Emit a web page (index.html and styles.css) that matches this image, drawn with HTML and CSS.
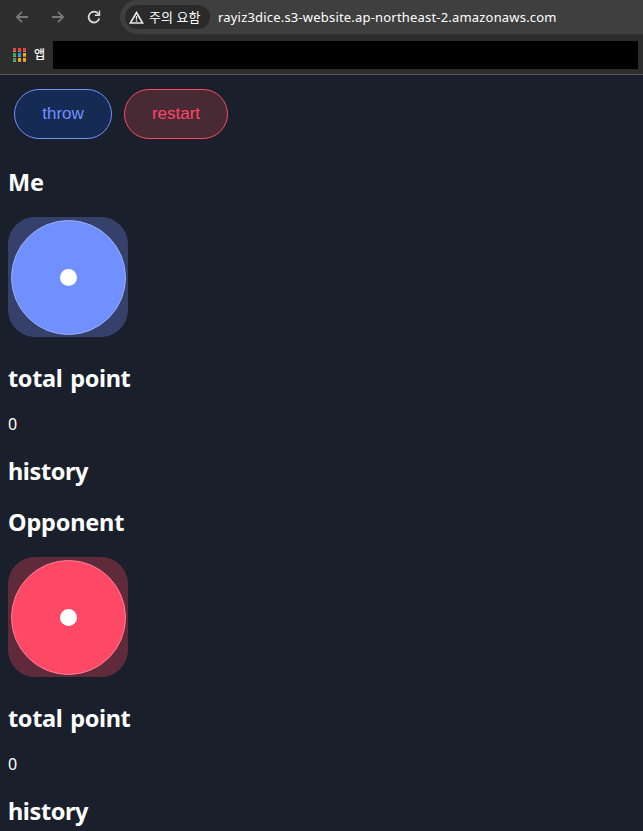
FILE: index.html
```html
<!DOCTYPE html>
<html lang="ko">
<head>
<meta charset="utf-8">
<title>Dice</title>
<link rel="stylesheet" href="styles.css">
</head>
<body>
<header class="browser">
  <div class="toolbar">
    <svg class="nav" width="14" height="14" viewBox="0 0 14 14"><path d="M13 7H2M7 1.8L1.8 7L7 12.2"/></svg>
    <svg class="nav forward" width="14" height="14" viewBox="0 0 14 14"><path d="M1 7h11M7 1.8L12.2 7L7 12.2"/></svg>
    <svg class="nav reload" width="14" height="14" viewBox="0 0 14 14"><path d="M11.5 4A5.4 5.4 0 1 0 12.3 8.4"/><path class="tip" d="M13.2 0.6V6H7.8V4.6L11.8 4.2V0.6z"/></svg>
    <div class="address">
      <div class="warning">
        <svg width="15" height="13" viewBox="0 0 15 13"><path d="M7.5 1.5L13.6 12H1.4z" fill="none" stroke="#e8e8e8" stroke-width="1.6"/><path d="M7.5 5v3.4M7.5 9.2v1.5" stroke="#e8e8e8" stroke-width="1.3"/></svg>
        <span class="warning-text">주의 요함</span>
      </div>
      <span class="url">rayiz3dice.s3-website.ap-northeast-2.amazonaws.com</span>
    </div>
  </div>
  <div class="bookmarks">
    <div class="apps"><i class="r"></i><i class="r"></i><i class="r"></i><i class="g"></i><i class="b"></i><i class="y"></i><i class="g"></i><i class="y"></i><i class="y"></i></div>
    <span class="apps-label">앱</span>
    <div class="redacted"></div>
  </div>
</header>
<main>
  <div class="actions">
    <button class="btn blue">throw</button>
    <button class="btn red">restart</button>
  </div>
  <section>
    <h2 class="name">Me</h2>
    <div class="die die-blue"><div class="face"><span class="pip"></span></div></div>
    <h2 class="total">total point</h2>
    <div class="points">0</div>
    <h2 class="history">history</h2>
  </section>
  <section>
    <h2 class="name">Opponent</h2>
    <div class="die die-red"><div class="face"><span class="pip"></span></div></div>
    <h2 class="total">total point</h2>
    <div class="points">0</div>
    <h2 class="history">history</h2>
  </section>
</main>
</body>
</html>
```
FILE: styles.css
```css
* { box-sizing: border-box; }
html { overflow: hidden; }
body {
  margin: 0;
  height: 831px;
  overflow: hidden;
  background: #1a1f2c;
  color: #fff;
  font-family: "Noto Sans", "Noto Sans CJK KR", sans-serif;
}
.browser {
  height: 75px;
  background: #2d2d2d;
  border-bottom: 1px solid #555;
}
.toolbar {
  display: flex;
  align-items: center;
  height: 34px;
  padding-left: 15px;
}
.nav {
  flex: none;
  margin-right: 22px;
  fill: none;
  stroke: #777;
  stroke-width: 1.8;
}
.reload { margin-right: 19px; stroke: #dedede; }
.reload .tip { fill: #dedede; stroke: none; }
.address {
  display: flex;
  align-items: center;
  flex: 1;
  height: 34px;
  padding-left: 5px;
  background: #3f3f3f;
  border-radius: 17px 0 0 17px;
  white-space: nowrap;
}
.warning {
  display: flex;
  align-items: center;
  gap: 4px;
  width: 85px;
  height: 24px;
  padding-left: 4px;
  border-radius: 12px;
  background: #2a2a2a;
}
.warning-text {
  padding-left: 1px;
  font: 13px/18px "Noto Sans CJK KR", sans-serif;
}
.url {
  margin-left: 8px;
  font-size: 13px;
  line-height: 18px;
  letter-spacing: 0.19px;
}
.bookmarks {
  display: flex;
  align-items: center;
  height: 40px;
  padding: 2px 0 0 13px;
}
.apps {
  display: grid;
  grid-template-columns: repeat(3, 3px);
  gap: 1px 2px;
}
.apps i { height: 4px; border-bottom: 1px solid #9b8f8b; }
.r { background: #ef4136; }
.g { background: #34a853; }
.b { background: #2196f3; }
.y { background: #f9ab00; }
.apps-label {
  width: 19px;
  margin: -2px 0 0 8px;
  font: 500 12px/16px "Noto Sans CJK KR", sans-serif;
}
.redacted { width: 585px; height: 28px; background: #000; }
main { padding: 8px; }
.actions { display: flex; gap: 12px; padding: 6px; }
.btn {
  height: 50px;
  padding: 0;
  border: 1px solid;
  border-radius: 25px;
  font: 17px/20px "Liberation Sans", sans-serif;
}
.blue { width: 98px; color: #7090ff; background: #152b54; }
.red { width: 104px; color: #ff4766; background: #482a34; }
h2 {
  margin: 20px 0;
  padding-top: 2px;
  font-size: 23.5px;
  line-height: 30px;
  font-weight: 700;
}
.total { letter-spacing: -0.35px; word-spacing: 2px; }
.history { margin-bottom: 19px; letter-spacing: -0.4px; }
.name { letter-spacing: -0.2px; }
section + section .name { margin-top: 19px; }
.die {
  width: 120px;
  height: 120px;
  margin-bottom: 24px;
  padding: 2.5px;
  border-radius: 27px;
}
.die-blue { background: #35416b; }
.die-red { background: #5f2b3b; }
.face {
  display: flex;
  align-items: center;
  justify-content: center;
  width: 115px;
  height: 115px;
  padding: 1px 0 0 1px;
  border: 1px solid;
  border-radius: 50%;
}
.die-blue .face { background: #7090ff; border-color: #9badf5; }
.die-red .face { background: #ff4766; border-color: #fa8095; }
.pip { width: 17px; height: 17px; border-radius: 50%; background: #fff; }
.points { padding-top: 1px; font-size: 16px; line-height: 20px; }
```
